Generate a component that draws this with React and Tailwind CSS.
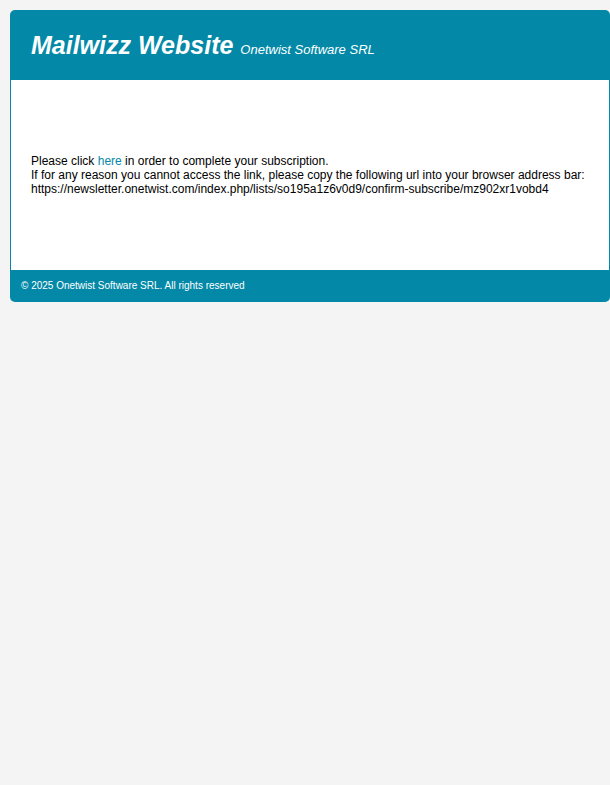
export default function App() {
  return (
    <div className="min-h-[785px] bg-[#f4f4f4] pt-[10px] pl-[10px] font-['Liberation_Sans',Arial,sans-serif]">
      <div className="w-[600px]">
        <div className="h-[70px] bg-[#0389a7] rounded-t-[5px] px-[21px] pt-[20px] flex items-baseline gap-[7px]">
          <h1 className="text-[25px] leading-[30px] font-bold italic text-white">Mailwizz Website</h1>
          <span className="text-[13px] italic text-white">Onetwist Software SRL</span>
        </div>
        <div className="h-[190px] bg-white border-x border-[#0389a7] px-[20px] pt-[74px] text-[12px] leading-[14px] text-black">
          <p>
            Please click <a className="text-[#0389a7]">here</a> in order to complete your subscription.
          </p>
          <p>If for any reason you cannot access the link, please copy the following url into your browser address bar:</p>
          <p>https://newsletter.onetwist.com/index.php/lists/so195a1z6v0d9/confirm-subscribe/mz902xr1vobd4</p>
        </div>
        <div className="h-[32px] bg-[#0389a7] rounded-b-[5px] px-[11px] pb-[1px] flex items-center text-[10px] leading-[12px] text-white">
          © 2025 Onetwist Software SRL. All rights reserved
        </div>
      </div>
    </div>
  );
}
